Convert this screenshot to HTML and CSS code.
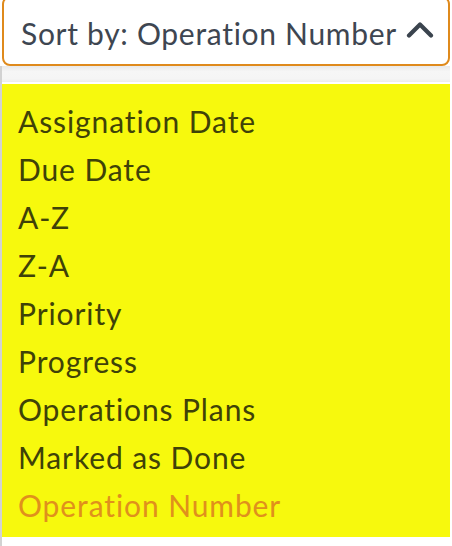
FILE: index.html
```html
<html lang="en">
<head>
  <meta charset="UTF-8">
  <meta name="viewport" content="width=device-width, initial-scale=1.0">
  <title>Sort by</title>
  <link rel="stylesheet" href="styles.css">
</head>
<body>
  <div class="sort-container">
    <button class="sort-button" type="button">
      <span class="sort-label">Sort by: Operation Number</span>
      <svg class="chevron" width="28" height="17" viewBox="0 0 28 17" aria-hidden="true">
        <polyline points="3,14.5 14,3.5 25,14.5" fill="none" stroke="#3b444e" stroke-width="4.2" stroke-linecap="round" stroke-linejoin="round"/>
      </svg>
    </button>
    <div class="sort-panel">
      <ul class="sort-options">
        <li>Assignation Date</li>
        <li>Due Date</li>
        <li>A-Z</li>
        <li>Z-A</li>
        <li>Priority</li>
        <li>Progress</li>
        <li>Operations Plans</li>
        <li>Marked as Done</li>
        <li class="selected">Operation Number</li>
      </ul>
    </div>
  </div>
</body>
</html>
```

FILE: styles.css
```css
/* General Styles */
body {
  margin: 0;
  padding: 0;
  background-color: #ffffff;
  font-family: Lato, 'Noto Sans', sans-serif;
  overflow: hidden;
}

.sort-container {
  width: 452px;
}

.sort-button {
  display: flex;
  align-items: center;
  justify-content: space-between;
  box-sizing: border-box;
  width: 448px;
  height: 70px;
  margin: -4px 0 0 2px;
  padding: 4px 14px 0 17px;
  background-color: #ffffff;
  border: 2px solid #df8a1c;
  border-radius: 8px;
  font-family: inherit;
  font-size: 30px;
  letter-spacing: 0.7px;
  color: #3e4651;
  cursor: pointer;
}

.sort-label {
  margin-top: -1px;
}

.chevron {
  display: block;
  margin-top: -7px;
}

.sort-panel {
  border-left: 2px solid #d2d2d2;
  padding-top: 17px;
  background: linear-gradient(#e9e9e9, #f6f6f6 35%, #f5f5f5 80%, #ececec 100%) no-repeat;
  background-size: 448px 16px;
}

.sort-options {
  list-style: none;
  margin: 1px 0 0 0;
  width: 448px;
  padding: 13px 0 8px 0;
  background-color: #f7f90d;
}

.sort-options li {
  height: 48px;
  line-height: 48px;
  padding-left: 16px;
  font-size: 30px;
  letter-spacing: 0.9px;
  color: #3f4208;
  cursor: pointer;
}

.sort-options li.selected {
  color: #e0901c;
}

.sort-panel::after {
  content: '';
  display: block;
  height: 20px;
}
```
